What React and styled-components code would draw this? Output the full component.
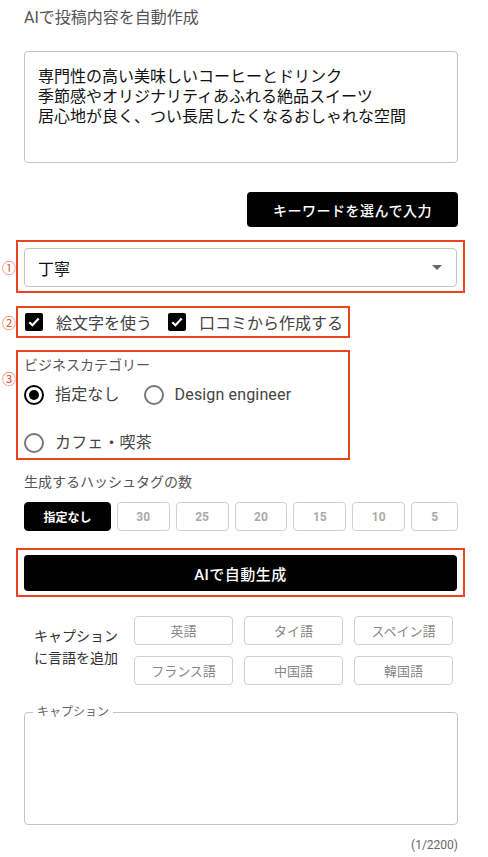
import React, { useState } from "react";
import styled, { createGlobalStyle } from "styled-components";

const GlobalStyle = createGlobalStyle`
  body {
    margin: 0;
    background: #fff;
    font-family: Roboto, "Noto Sans CJK JP", sans-serif;
    color: #222;
  }
`;

const Page = styled.div`
  width: 488px;
  padding: 8px 30px 0 24px;
  box-sizing: border-box;
`;

const Title = styled.div`
  font-size: 16px;
  line-height: 20px;
  color: #555;
`;

const TextBox = styled.div`
  margin-top: 23px;
  height: 112px;
  box-sizing: border-box;
  border: 1px solid #c4c4c4;
  border-radius: 4px;
  padding: 15px 13px;
  font-size: 16px;
  line-height: 20px;
  color: #111;
  white-space: pre-line;
`;

const RightRow = styled.div`
  display: flex;
  justify-content: flex-end;
  margin-top: 29px;
`;

const DarkButton = styled.button`
  border: none;
  background: #000;
  color: #fff;
  border-radius: 4px;
  font-family: inherit;
  font-weight: 500;
  font-size: ${(p) => p.$size || 14}px;
  height: ${(p) => p.$h || 35}px;
  width: ${(p) => (p.$full ? "100%" : `${p.$w}px`)};
  padding: 0;
  letter-spacing: 0.5px;
  cursor: pointer;
`;

const Highlight = styled.div`
  position: relative;
  margin-top: ${(p) => p.$mt}px;
  margin-left: -8px;
  width: ${(p) => (p.$w ? `${p.$w}px` : "calc(100% + 15px)")};
  box-sizing: border-box;
  border: 2px solid #ea4520;
  padding: ${(p) => p.$pad || "6px"};
`;

const Marker = styled.span`
  position: absolute;
  left: -16px;
  top: ${(p) => p.$top}px;
  font-size: 14px;
  line-height: 14px;
  color: #ee5a36;
`;

const SelectBox = styled.div`
  height: 39px;
  box-sizing: border-box;
  border: 1px solid #c4c4c4;
  border-radius: 4px;
  display: flex;
  align-items: center;
  justify-content: space-between;
  padding: 0 14px 0 13px;
  font-size: 16px;
  color: #111;
`;

const Caret = styled.span`
  width: 0;
  height: 0;
  border-left: 5px solid transparent;
  border-right: 5px solid transparent;
  border-top: 5px solid #666;
`;

const CheckRow = styled.div`
  display: flex;
  align-items: center;
  height: 28px;
`;

const CheckItem = styled.label`
  display: flex;
  align-items: center;
  gap: 13px;
  margin-left: 1px;
  margin-right: ${(p) => p.$mr || 0}px;
  font-size: 16px;
  color: #444;
  white-space: nowrap;
  flex-shrink: 0;
`;

const CheckMark = styled.span`
  width: 18px;
  height: 18px;
  border-radius: 2px;
  background: #000;
  display: flex;
  align-items: center;
  justify-content: center;
`;

const GroupLabel = styled.div`
  font-size: 14px;
  line-height: 18px;
  color: #555;
  margin-top: -2px;
`;

const RadioGrid = styled.div`
  display: flex;
  flex-wrap: wrap;
  row-gap: 28px;
  margin-top: 11px;
`;

const RadioItem = styled.label`
  display: flex;
  align-items: center;
  gap: 11px;
  margin-right: ${(p) => p.$mr || 0}px;
  font-size: 16px;
  line-height: 20px;
  color: #444;
  white-space: nowrap;
  letter-spacing: 0.15px;
`;

const RadioDot = styled.span`
  width: 20px;
  height: 20px;
  box-sizing: border-box;
  border-radius: 50%;
  border: 2px solid ${(p) => (p.$on ? "#000" : "#777")};
  display: flex;
  align-items: center;
  justify-content: center;
  &::after {
    content: "";
    width: 10px;
    height: 10px;
    border-radius: 50%;
    background: #000;
    display: ${(p) => (p.$on ? "block" : "none")};
  }
`;

const SubLabel = styled.div`
  margin-top: 12px;
  font-size: 14px;
  line-height: 20px;
  color: #555;
`;

const ChipRow = styled.div`
  display: flex;
  gap: 6px;
  margin-top: 10px;
`;

const Chip = styled.button`
  height: 29px;
  width: ${(p) => p.$w}px;
  box-sizing: border-box;
  border-radius: 4px;
  border: 1px solid ${(p) => (p.$on ? "#000" : "#d0d0d0")};
  background: ${(p) => (p.$on ? "#000" : "#fff")};
  color: ${(p) => (p.$on ? "#fff" : "#aaa")};
  font-family: inherit;
  font-size: 12px;
  font-weight: 700;
  padding: 0;
`;

const LangSection = styled.div`
  display: flex;
  margin-top: 19px;
  padding-left: 10px;
  gap: 16px;
`;

const LangLabel = styled.div`
  font-size: 14px;
  line-height: 22px;
  color: #333;
  padding-top: 9px;
  width: 84px;
  white-space: nowrap;
`;

const LangGrid = styled.div`
  display: grid;
  grid-template-columns: repeat(3, 99px);
  column-gap: 11px;
  row-gap: 11px;
`;

const LangChip = styled.button`
  height: 29px;
  box-sizing: border-box;
  border-radius: 4px;
  border: 1px solid #d0d0d0;
  background: #fff;
  color: #888;
  font-family: inherit;
  font-size: 13px;
  padding: 0;
`;

const Caption = styled.fieldset`
  margin: 21px 0 0;
  height: 119px;
  box-sizing: border-box;
  border: 1px solid #c4c4c4;
  border-radius: 4px;
  padding: 0 14px;
  legend {
    padding: 0 4px;
    margin-left: -6px;
    font-size: 12px;
    line-height: 12px;
    color: #666;
  }
`;

const Counter = styled.div`
  text-align: right;
  font-size: 12px;
  line-height: 16px;
  color: #666;
  margin-top: 12px;
`;

const hashCounts = ["30", "25", "20", "15", "10", "5"];
const langs = ["英語", "タイ語", "スペイン語", "フランス語", "中国語", "韓国語"];

const Check = ({ children, mr }) => (
  <CheckItem $mr={mr}>
    <CheckMark>
      <svg width="12" height="10" viewBox="0 0 12 10">
        <path d="M1.3 5.2 L4.4 8.2 L10.7 1.6" stroke="#fff" strokeWidth="2.2" fill="none" />
      </svg>
    </CheckMark>
    {children}
  </CheckItem>
);

export default function App() {
  const [cat, setCat] = useState("none");
  const [tags, setTags] = useState("none");

  return (
    <Page>
      <GlobalStyle />
      <Title>AIで投稿内容を自動作成</Title>
      <TextBox>
        {"専門性の高い美味しいコーヒーとドリンク\n季節感やオリジナリティあふれる絶品スイーツ\n居心地が良く、つい長居したくなるおしゃれな空間"}
      </TextBox>

      <RightRow>
        <DarkButton $w={211}>キーワードを選んで入力</DarkButton>
      </RightRow>

      <Highlight $mt={13} $pad="6px 6px 4px">
        <Marker $top={19}>①</Marker>
        <SelectBox>
          丁寧
          <Caret />
        </SelectBox>
      </Highlight>

      <Highlight $mt={13} $w={334} $pad="0 6px">
        <Marker $top={8}>②</Marker>
        <CheckRow>
          <Check mr={15}>絵文字を使う</Check>
          <Check>口コミから作成する</Check>
        </CheckRow>
      </Highlight>

      <Highlight $mt={12} $w={334} $pad="6px 6px 5px">
        <Marker $top={20}>③</Marker>
        <GroupLabel>ビジネスカテゴリー</GroupLabel>
        <RadioGrid>
          <RadioItem $mr={24} onClick={() => setCat("none")}>
            <RadioDot $on={cat === "none"} />
            指定なし
          </RadioItem>
          <RadioItem onClick={() => setCat("design")}>
            <RadioDot $on={cat === "design"} />
            Design engineer
          </RadioItem>
          <RadioItem $mr={100} onClick={() => setCat("cafe")}>
            <RadioDot $on={cat === "cafe"} />
            カフェ・喫茶
          </RadioItem>
        </RadioGrid>
      </Highlight>

      <SubLabel>生成するハッシュタグの数</SubLabel>
      <ChipRow>
        <Chip $w={87} $on={tags === "none"} onClick={() => setTags("none")}>
          指定なし
        </Chip>
        {hashCounts.map((n) => (
          <Chip key={n} $w={n === "5" ? 47 : 53} $on={tags === n} onClick={() => setTags(n)}>
            {n}
          </Chip>
        ))}
      </ChipRow>

      <Highlight $mt={17} $pad="5px 6px 4px">
        <DarkButton $full $h={36} $size={15}>
          AIで自動生成
        </DarkButton>
      </Highlight>

      <LangSection>
        <LangLabel>
          キャプション
          <br />
          に言語を追加
        </LangLabel>
        <LangGrid>
          {langs.map((l) => (
            <LangChip key={l}>{l}</LangChip>
          ))}
        </LangGrid>
      </LangSection>

      <Caption>
        <legend>キャプション</legend>
      </Caption>
      <Counter>(1/2200)</Counter>
    </Page>
  );
}
